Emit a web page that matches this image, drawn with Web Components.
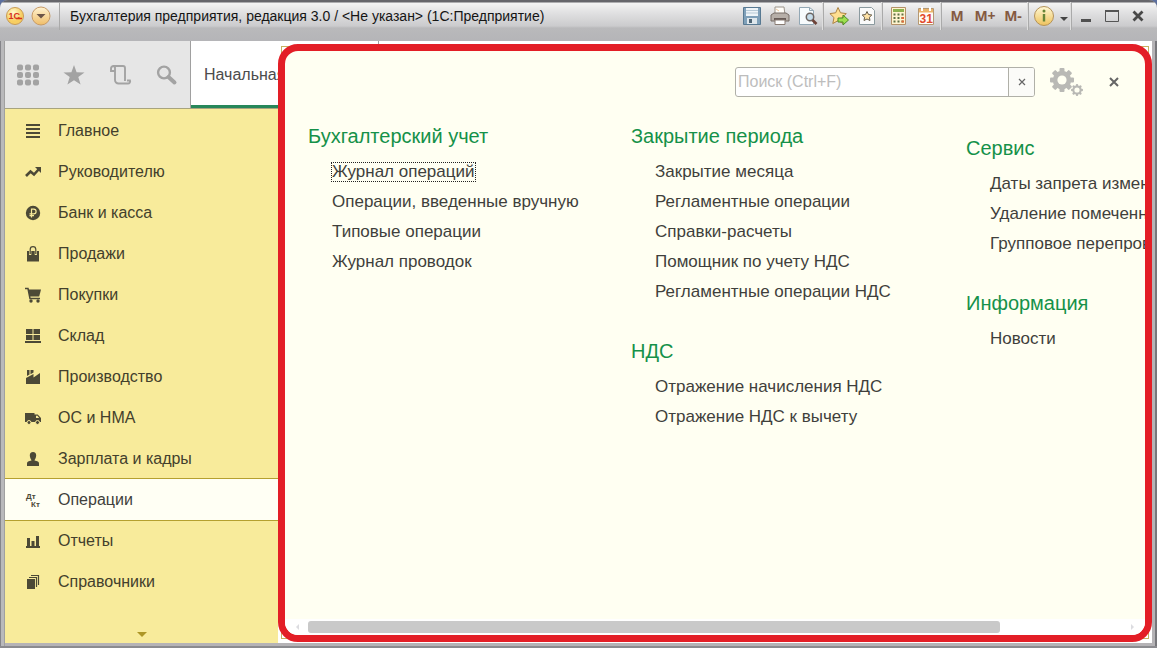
<!DOCTYPE html>
<html lang="ru">
<head>
<meta charset="utf-8">
<title>Бухгалтерия предприятия</title>
<style>
  html, body { margin: 0; height: 100%; }
  body { background: #5c6f9e; font: 16px/20px "Liberation Sans", Arial, sans-serif; color: #3f3f3c; overflow: hidden; }
</style>
</head>
<body>
<app-window>
  <title-bar slot="title"></title-bar>
  <section-tools slot="tools"></section-tools>
  <side-nav slot="nav">
    <nav-item icon="lines">Главное</nav-item>
    <nav-item icon="trend">Руководителю</nav-item>
    <nav-item icon="ruble">Банк и касса</nav-item>
    <nav-item icon="bag">Продажи</nav-item>
    <nav-item icon="cart">Покупки</nav-item>
    <nav-item icon="boxes">Склад</nav-item>
    <nav-item icon="factory">Производство</nav-item>
    <nav-item icon="truck">ОС и НМА</nav-item>
    <nav-item icon="person">Зарплата и кадры</nav-item>
    <nav-item icon="dtkt" current>Операции</nav-item>
    <nav-item icon="bars">Отчеты</nav-item>
    <nav-item icon="books">Справочники</nav-item>
  </side-nav>
  <function-panel slot="panel">
    <panel-column>
      <link-group heading="Бухгалтерский учет">
        <menu-link focused>Журнал операций</menu-link>
        <menu-link>Операции, введенные вручную</menu-link>
        <menu-link>Типовые операции</menu-link>
        <menu-link>Журнал проводок</menu-link>
      </link-group>
    </panel-column>
    <panel-column>
      <link-group heading="Закрытие периода">
        <menu-link>Закрытие месяца</menu-link>
        <menu-link>Регламентные операции</menu-link>
        <menu-link>Справки-расчеты</menu-link>
        <menu-link>Помощник по учету НДС</menu-link>
        <menu-link>Регламентные операции НДС</menu-link>
      </link-group>
      <link-group heading="НДС">
        <menu-link>Отражение начисления НДС</menu-link>
        <menu-link>Отражение НДС к вычету</menu-link>
      </link-group>
    </panel-column>
    <panel-column lowered>
      <link-group heading="Сервис">
        <menu-link>Даты запрета изменения</menu-link>
        <menu-link>Удаление помеченных</menu-link>
        <menu-link>Групповое перепроведение</menu-link>
      </link-group>
      <link-group heading="Информация">
        <menu-link>Новости</menu-link>
      </link-group>
    </panel-column>
  </function-panel>
</app-window>

<script>
const define = (name, html, setup) => {
  const template = document.createElement('template');
  template.innerHTML = html;
  customElements.define(name, class extends HTMLElement {
    connectedCallback() {
      if (this.shadowRoot) return;
      const root = this.attachShadow({ mode: 'open' });
      root.append(template.content.cloneNode(true));
      if (setup) setup(this, root);
    }
  });
};

/* name: [width, height, markup] */
const ICONS = {
  lines: [16, 16, '<path d="M1 2h14M1 6h14M1 10h14M1 14h14" stroke="currentColor" stroke-width="2"/>'],
  trend: [16, 16, '<path d="M1 12l4.500-4.500 3.500 3L14 5" fill="none" stroke="currentColor" stroke-width="2.600"/><path d="M10 3h6v6z" fill="currentColor"/>'],
  ruble: [16, 16, '<circle cx="8" cy="8" r="7.200" fill="currentColor"/><path d="M6.500 12.500V4.200h2.300a2.200 2.200 0 010 4.600H4.500M4.500 10.700H9" fill="none" stroke="#f8eb9b" stroke-width="1.200"/>'],
  bag: [16, 16, '<path d="M2 5h12v10.500H2z" fill="currentColor"/><path d="M5.200 9V4a2.800 2.800 0 015.600 0v5" fill="none" stroke="#f8eb9b" stroke-width="2.200"/><path d="M5.200 8V3.500a2.800 2.800 0 015.600 0V8" fill="none" stroke="currentColor" stroke-width="1.200"/>'],
  cart: [16, 16, '<path d="M0 1.500h3l2 10h10" fill="none" stroke="currentColor" stroke-width="1.500"/><path d="M3.200 2.500H16L14.200 9.500H4.600z" fill="currentColor"/><circle cx="6" cy="14" r="1.700" fill="currentColor"/><circle cx="13" cy="14" r="1.700" fill="currentColor"/>'],
  boxes: [16, 16, '<path d="M1 1h6.500v5H1zM8.500 1H15v5H8.500zM1 7h6.500v5H1zM8.500 7H15v5H8.500zM0 13h16v2H0z" fill="currentColor"/>'],
  factory: [16, 16, '<path d="M1 15V9L8.500 5v3.500L15 4v11z" fill="currentColor"/><path d="M2 1h2.500v4.500L2 7zM5.500 1H8.500v2.500l-3 1.700z" fill="currentColor"/>'],
  truck: [16, 16, '<path d="M0 3h9.500v9H0zM9.500 4.500h3.200l3.300 3.500v4H9.500z" fill="currentColor"/><path d="M11 5.700h1.400l1.800 2.300H11z" fill="#f8eb9b"/><g fill="currentColor" stroke="#f8eb9b"><circle cx="4" cy="12.500" r="2"/><circle cx="12.500" cy="12.500" r="2"/></g>'],
  person: [16, 16, '<path d="M8 1c2.200 0 3.200 1.500 3.200 3.500S9.800 8.500 9.500 9.500c3 .5 4.500 1 4.500 3V15H2v-2.500C2 10.500 3.500 10 6.500 9.500 6.200 8.500 4.800 6.500 4.800 4.500S5.800 1 8 1z" fill="currentColor"/>'],
  dtkt: [16, 16, '<g fill="currentColor" font-family="Liberation Sans" font-weight="bold" font-size="8"><text x="1" y="7">Дт</text><text x="6" y="15">Кт</text></g>'],
  bars: [16, 16, '<path d="M1 13h14v2H1zM2 5h3v8H2zM6.500 8h3v5h-3zM11 3h3v10h-3z" fill="currentColor"/>'],
  books: [16, 16, '<path d="M2 5h8v10H2z" fill="currentColor"/><path d="M4 3.500h7.500V13M6 1.500h7.500V11" fill="none" stroke="currentColor" stroke-width="1.200"/>'],
  apps: [24, 24, '<g fill="currentColor">' + [4.5, 12, 19.5].map(y => [4, 12, 20].map(x => `<rect x="${x - 3}" y="${y - 3}" width="6" height="6" rx="2"/>`).join('')).join('') + '</g>'],
  star: [24, 24, '<path d="M12 2l2.600 7.300 7.900.1-6.200 4.700 2.300 7.500L12 17.200l-6.600 4.400 2.300-7.500L1.500 9.400l7.900-.1z" fill="currentColor"/>'],
  scroll: [24, 24, '<path d="M6.500 8H3V5.500A2.500 2.500 0 015.500 3H15a2 2 0 012 2v13M7 5.500V17a3.500 3.500 0 003.500 3.500h9.300a2.200 2.200 0 002.200-3h-3M5.500 3A2 2 0 017 5.500V8" fill="none" stroke="currentColor" stroke-width="1.900"/>'],
  search: [24, 24, '<circle cx="10" cy="9.500" r="5.900" fill="none" stroke="currentColor" stroke-width="2.400"/><path d="M14.500 14l6 5.500" stroke="currentColor" stroke-width="4" stroke-linecap="round"/>'],
  logo: [20, 20, '<defs><radialGradient id="g" cx=".4" cy=".3"><stop offset="0" stop-color="#fffbd0"/><stop offset="1" stop-color="#f7ce62"/></radialGradient></defs><circle cx="10" cy="10" r="8.500" fill="url(#g)" stroke="#c79a55"/><text x="3.500" y="13" font-family="Liberation Sans" font-size="9" font-weight="bold" fill="#d8301c">1С</text><path d="M11 12.500h6" stroke="#d8301c" stroke-width="1.300"/>'],
  drop: [20, 20, '<defs><linearGradient id="g" x2="0" y2="1"><stop offset="0" stop-color="#fff3d2"/><stop offset="1" stop-color="#efbd68"/></linearGradient></defs><circle cx="10" cy="10" r="9" fill="url(#g)" stroke="#c79a66"/><path d="M5.500 8h9L10 12.500z" fill="#6c5548"/>'],
  save: [20, 20, '<path d="M1.500 1.500h17v17h-17z" fill="#7fa0b9" stroke="#587992"/><path d="M4 2h12v8H4z" fill="#eef4f8"/><path d="M4 4.500h12M4 7h12" stroke="#b7c9d6"/><path d="M5 12h10v6H5z" fill="#dfe7ec"/><path d="M7 13h3v4H7z" fill="#4e6474"/>'],
  print: [20, 20, '<path d="M5 1h9l1 8H5z" fill="#fffdf8" stroke="#9b948b"/><path d="M1 9l3-2h12l3 2v6H1z" fill="#b7afa8" stroke="#776d67"/><path d="M4 12h12v2H4z" fill="#675b56"/><path d="M5 14h10v4.500H5z" fill="#fff" stroke="#887b72"/><path d="M6 3l3 2" stroke="#ecc6a0"/>'],
  preview: [20, 20, '<path d="M1.500 1.500h10l4 3v14h-14z" fill="#f7fbfd" stroke="#93a8b5"/><path d="M11.500 1.500v3h4" fill="none" stroke="#93a8b5"/><circle cx="12" cy="11" r="3.700" fill="#c5dcea" stroke="#6c6461" stroke-width="1.500"/><path d="M14.500 14l4 4" stroke="#6e4238" stroke-width="2.600"/>'],
  starGo: [20, 20, '<path d="M9 1.500l2.500 5.300 5.800.8-4.300 4 1.200 5.900L9 14.700l-5.200 2.800L5 11.600.9 7.600l5.800-.8z" fill="#ffdf91" stroke="#ad8445"/><path d="M9 12h5V9l5.500 5-5.500 5v-3H9z" fill="#9ddf4d" stroke="#4c8b27"/>'],
  starDoc: [20, 20, '<path d="M2.500 1.500h12l3 3v14h-15z" fill="#fafafa" stroke="#8b9a9f"/><path d="M10 5.500l1.500 3 3.300.5-2.400 2.300.6 3.200-3-1.500-3 1.500.6-3.200L5.200 9l3.300-.5z" fill="#ffe2a6" stroke="#665c4a"/>'],
  calc: [20, 20, '<path d="M3.500 1.500h14v17h-14z" fill="#fff4d0" stroke="#b49168"/><path d="M5 3h11v3H5z" fill="#8db24f"/><path d="M5.500 8.500h10M5.500 12h10M5.500 15.500h10" stroke="#5f7045" stroke-width="2" stroke-dasharray="2 2"/><path d="M13.500 12h2.500M13.500 15.500h2.500" stroke="#e16938" stroke-width="2"/>'],
  date: [20, 20, '<path d="M2.500 2.500h15v16h-15z" fill="#fffdf7" stroke="#b59872"/><path d="M3 3h14v3.500H3z" fill="#ecb56b"/><path d="M6 1v4M14 1v4" stroke="#fff" stroke-width="2"/><text x="3.500" y="17" font-family="Liberation Sans" font-size="12" font-weight="bold" fill="#e24a2c">31</text>'],
  info: [22, 22, '<defs><linearGradient id="g" x2="0" y2="1"><stop offset="0" stop-color="#fff8d5"/><stop offset="1" stop-color="#eec25c"/></linearGradient></defs><circle cx="11" cy="11" r="9.500" fill="url(#g)" stroke="#b3925a"/><circle cx="11" cy="6" r="1.500" fill="#678437"/><path d="M11 9v7.500" fill="none" stroke="#678437" stroke-width="2.400"/>'],
  caret: [10, 20, '<path d="M1 11h8l-4 4z" fill="#444"/>'],
  min: [20, 20, '<path d="M5 14.500h10" stroke="#505050" stroke-width="3"/>'],
  max: [20, 20, '<path d="M3.500 4.500h13v11h-13z" fill="none" stroke="#555"/><path d="M3 5h14" stroke="#555" stroke-width="2"/>'],
  close: [20, 20, '<path d="M5.500 5.500l9 9M14.500 5.500l-9 9" stroke="#484848" stroke-width="2.800"/>'],
  cross: [12, 12, '<path d="M2 2l8 8M10 2l-8 8" stroke="currentColor" stroke-width="2"/>'],
  crossThin: [12, 12, '<path d="M3 3l6 6M9 3l-6 6" stroke="currentColor" stroke-width="1.200"/>'],
  down: [12, 8, '<path d="M1 2h10L6 7z" fill="#ad9626"/>'],
  left: [8, 8, '<path d="M6 1v6L3 4z" fill="#dcdce0"/>'],
  right: [8, 8, '<path d="M2 1v6l3-3z" fill="#dcdce0"/>']
};
const gear = (cx, cy, r, hole, n, tw) => {
  let teeth = '';
  for (let i = 0; i < n; i++) teeth += `<rect x="${cx - tw / 2}" y="${cy - r}" width="${tw}" height="${r}" rx="1" transform="rotate(${i * 360 / n} ${cx} ${cy})"/>`;
  return `<g fill="currentColor">${teeth}<circle cx="${cx}" cy="${cy}" r="${r * .77}"/></g><circle cx="${cx}" cy="${cy}" r="${hole}" fill="#fffff2"/>`;
};
ICONS.gears = [34, 30, gear(12, 13, 12, 4.6, 8, 5) + gear(27, 23, 6, 2.6, 8, 2.4)];

define('ui-icon', `<style>:host{display:block;flex:none} svg{display:block}</style>`, (el, root) => {
  const [w, h, body] = ICONS[el.getAttribute('name')];
  root.innerHTML += `<svg width="${w}" height="${h}" viewBox="0 0 ${w} ${h}" aria-hidden="true">${body}</svg>`;
});

define('app-window', `
<style>
  :host { display: grid; grid-template-rows: 41px minmax(0, 1fr); height: 100vh; box-sizing: border-box; padding: 0 5px 5px;
    border-radius: 8px 8px 0 0; overflow: hidden;
    background: linear-gradient(90deg, #85858a 0 1px, #b9b9bb 1px 4px, #a0a0a0 4px 5px, #b5b3b6 5px calc(100% - 2px), #77777b calc(100% - 2px));
    box-shadow: inset 0 -2px #8b8b8f; }
  .title { margin: 0 -5px; }
  .work { position: relative; display: grid; grid-template: 67px minmax(0, 1fr) / 273px minmax(0, 1fr); background: #fff; }
  .tools { grid-column: 1 / -1; }
  .panel { position: absolute; inset: 3px 0 1px 273px; }
  .panel::before { content: ""; position: absolute; inset: 2px 3px 3px 3px; border: 1px solid #c8b060; }
</style>
<div class="title"><slot name="title"></slot></div>
<div class="work">
  <div class="tools"><slot name="tools"></slot></div>
  <slot name="nav"></slot>
  <div class="panel"><slot name="panel"></slot></div>
</div>`);

define('tool-button', `
<style>
  :host { display: block; }
  button { display: flex; align-items: center; justify-content: center; width: 100%; height: 28px; padding: 0; border: 0; background: none;
    font: bold 14px/20px "Open Sans", sans-serif; color: #855a42; }
</style>
<button><slot></slot></button>`, (el, root) => root.querySelector('button').setAttribute('aria-label', el.getAttribute('label')));

define('title-bar', `
<style>
  :host { display: flex; align-items: flex-start; box-sizing: border-box; height: 41px; padding: 2px 6px 0 5px;
    background: linear-gradient(#66666b 0 2px, #f4f4f4 3px, #e2e2e3 12px, #cbcbcd 26px, #b9b9bb 28px, #b5b5b8 40px); }
  .logo { display: flex; align-items: center; gap: 6px; height: 28px; width: 54px; border-right: 1px solid #aaa; }
  h1 { flex: 1; margin: 0 0 0 10px; font: 14px/28px "Liberation Sans", Arial, sans-serif; color: #151515; white-space: pre; }
  .group { display: flex; }
  .group + .group { border-left: 1px solid #aaa; box-shadow: -1px 0 #dedede; margin-left: 1px; padding-left: 1px; }
  tool-button { width: 28px; }
  .win tool-button { width: 26px; }
  tool-button.narrow { width: 12px; }
</style>
<div class="logo"><ui-icon name="logo"></ui-icon><ui-icon name="drop"></ui-icon></div>
<h1>Бухгалтерия предприятия, редакция 3.0 / &lt;Не указан&gt; (1С:Предприятие)</h1>
<div class="group">
  <tool-button label="Сохранить"><ui-icon name="save"></ui-icon></tool-button>
  <tool-button label="Печать"><ui-icon name="print"></ui-icon></tool-button>
  <tool-button label="Просмотр"><ui-icon name="preview"></ui-icon></tool-button>
</div>
<div class="group">
  <tool-button label="Перейти по ссылке"><ui-icon name="starGo"></ui-icon></tool-button>
  <tool-button label="В избранное"><ui-icon name="starDoc"></ui-icon></tool-button>
</div>
<div class="group">
  <tool-button label="Калькулятор"><ui-icon name="calc"></ui-icon></tool-button>
  <tool-button label="Календарь"><ui-icon name="date"></ui-icon></tool-button>
</div>
<div class="group">
  <tool-button label="M">M</tool-button>
  <tool-button label="M+">M+</tool-button>
  <tool-button label="M-">M-</tool-button>
</div>
<div class="group">
  <tool-button label="Информация"><ui-icon name="info"></ui-icon></tool-button>
  <tool-button class="narrow" label="Еще"><ui-icon name="caret"></ui-icon></tool-button>
</div>
<div class="group win">
  <tool-button label="Свернуть"><ui-icon name="min"></ui-icon></tool-button>
  <tool-button label="Развернуть"><ui-icon name="max"></ui-icon></tool-button>
  <tool-button label="Закрыть"><ui-icon name="close"></ui-icon></tool-button>
</div>`);

define('section-tools', `
<style>
  :host { display: flex; height: 67px; background: #fff; }
  .icons { display: grid; grid-template-columns: repeat(4, 46px); box-sizing: border-box; width: 186px; border-right: 1px solid #a0a0a0; background: #e6e6e6; }
  button { display: grid; place-items: center; padding: 0; border: 0; background: none; color: #a3a3a3; }
  a { box-sizing: border-box; width: 188px; padding: 24px 0 0 13px; border-bottom: 3px solid #27875a; border-right: 1px solid #a0a0a0;
    font-size: 16px; line-height: 20px; color: #4c4c4c; text-decoration: none; white-space: nowrap; }
</style>
<div class="icons">
  <button aria-label="Разделы"><ui-icon name="apps"></ui-icon></button>
  <button aria-label="Избранное"><ui-icon name="star"></ui-icon></button>
  <button aria-label="История"><ui-icon name="scroll"></ui-icon></button>
  <button aria-label="Поиск"><ui-icon name="search"></ui-icon></button>
</div>
<a href="#">Начальная страница</a>`);

define('side-nav', `
<style>
  :host { display: block; background: #f8eb9b; border-top: 1px solid #a8a47e; }
  nav { display: flex; flex-direction: column; box-sizing: border-box; height: 100%; padding-top: 1px; }
  button { display: flex; justify-content: center; margin: auto 0 5px; padding: 0; border: 0; background: none; }
</style>
<nav><slot></slot><button aria-label="Ниже"><ui-icon name="down"></ui-icon></button></nav>`);

define('nav-item', `
<style>
  :host { display: block; }
  a { display: flex; align-items: center; gap: 17px; height: 41px; padding-left: 20px; color: #43402c; text-decoration: none; white-space: nowrap; }
  .icon { color: #4c4936; }
  :host([current]) a { background: #fffff4; box-shadow: 0 -1px #b5a02f, 0 1px #b5a02f; color: #3f3f3c; }
</style>
<a href="#"><span class="icon"></span><span><slot></slot></span></a>`, (el, root) => {
  const icon = document.createElement('ui-icon');
  icon.setAttribute('name', el.getAttribute('icon'));
  root.querySelector('.icon').append(icon);
});

define('function-panel', `
<style>
  :host { position: relative; display: flex; flex-direction: column; box-sizing: border-box; height: 100%; border: 7px solid #e31e26; border-radius: 20px; background: #fffff2; overflow: hidden; }
  header { display: flex; align-items: center; justify-content: flex-end; height: 30px; padding: 16px 25px 24px 0; }
  form { display: flex; box-sizing: border-box; width: 300px; height: 30px; border: 1px solid #b0b0a8; border-radius: 3px; background: #fff; overflow: hidden; }
  input { flex: 1; min-width: 0; padding: 0 2px; border: 0; outline: 0; background: none; font: 16px/20px "Liberation Sans", Arial, sans-serif; }
  input::placeholder { color: #bdbdbd; opacity: 1; }
  button { display: grid; place-items: center; padding: 0; border: 0; background: none; color: #666; }
  form button { width: 26px; border-left: 1px solid #b0b0a8; background: #fbfbf8; }
  .gear { margin: 0 24px 0 15px; color: #b9b9b5; }
  main { flex: 1; min-height: 0; display: grid; grid-template-columns: 323px 335px 335px; padding-left: 23px; overflow-x: auto; overflow-y: hidden; scrollbar-width: none; }
  .scroll { display: flex; flex: none; align-items: center; height: 16px; padding: 0 8px; background: #fff; }
  .track { flex: 1; margin: 0 7px; }
  .thumb { width: 85%; height: 12px; border-radius: 3px; background: #c9c9c9; }
</style>
<header>
  <form><input type="text" aria-label="Поиск" placeholder="Поиск (Ctrl+F)"><button type="button" aria-label="Очистить"><ui-icon name="crossThin"></ui-icon></button></form>
  <button class="gear" aria-label="Настройки"><ui-icon name="gears"></ui-icon></button>
  <button aria-label="Закрыть панель"><ui-icon name="cross"></ui-icon></button>
</header>
<main><slot></slot></main>
<div class="scroll"><ui-icon name="left"></ui-icon><div class="track"><div class="thumb"></div></div><ui-icon name="right"></ui-icon></div>`);

define('panel-column', `
<style>
  :host { display: flex; flex-direction: column; gap: 29px; }
  :host([lowered]) { padding-top: 12px; }
</style>
<slot></slot>`);

define('link-group', `
<style>
  :host { display: block; }
  h2 { margin: 0 0 6px; font: 20px/30px "Liberation Sans", Arial, sans-serif; color: #159149; white-space: nowrap; }
  div { padding-left: 23px; }
</style>
<h2></h2><div><slot></slot></div>`, (el, root) => { root.querySelector('h2').textContent = el.getAttribute('heading'); });

define('menu-link', `
<style>
  :host { display: flex; align-items: center; height: 30px; }
  a { padding: 0 1px; font-size: 17px; line-height: 20px; color: #3f3f3c; text-decoration: none; white-space: nowrap; }
  :host([focused]) a { outline: 1px dotted #222; outline-offset: -1px; }
</style>
<a href="#"><slot></slot></a>`);
</script>
</body>
</html>
